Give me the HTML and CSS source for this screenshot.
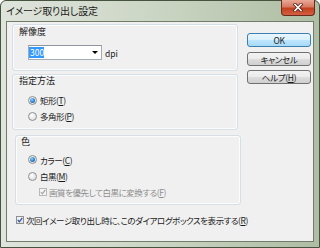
FILE: index.html
```html
<!DOCTYPE html>
<html lang="ja">
<head>
    <meta charset="UTF-8">
    <title>イメージ取り出し設定</title>
    <link rel="stylesheet" href="styles.css">
</head>
<body>
    <div class="window">
        <div class="titlebar">
            <span class="title">イメージ取り出し設定</span>
            <span class="close">
                <svg width="10" height="9" viewBox="0 0 10 9">
                    <path d="M2 1.5 L8 7.5 M8 1.5 L2 7.5" stroke="#5a2016" stroke-width="3.2" stroke-linecap="square"/>
                    <path d="M2 1.5 L8 7.5 M8 1.5 L2 7.5" stroke="#ffffff" stroke-width="1.6" stroke-linecap="square"/>
                </svg>
            </span>
        </div>

        <div class="client">
            <div class="main">
                <div class="group group-res">
                    <div class="legend">解像度</div>
                    <div class="res-row">
                        <div class="combo">
                            <span class="sel">300</span>
                            <span class="arrow"></span>
                        </div>
                        <span class="unit">dpi</span>
                    </div>
                </div>

                <div class="group group-method">
                    <div class="legend">指定方法</div>
                    <div class="opt"><span class="radio on"></span>矩形(<u>T</u>)</div>
                    <div class="opt"><span class="radio"></span>多角形(<u>P</u>)</div>
                </div>

                <div class="group group-color">
                    <div class="legend">色</div>
                    <div class="opt opt-first"><span class="radio on"></span>カラー(<u>C</u>)</div>
                    <div class="opt"><span class="radio"></span>白黒(<u>M</u>)</div>
                    <div class="opt sub disabled">
                        <span class="check">
                            <svg width="6" height="6" viewBox="0 0 6 6"><path d="M0.8 3 L2.4 4.8 L5.3 0.9" fill="none" stroke="#a0a0a0" stroke-width="1.1"/></svg>
                        </span>画質を優先して白黒に変換する(<u>F</u>)
                    </div>
                </div>

                <div class="opt show-next">
                    <span class="check">
                        <svg width="6" height="6" viewBox="0 0 6 6"><path d="M0.8 3 L2.4 4.8 L5.3 0.9" fill="none" stroke="#2c4fa8" stroke-width="1.2"/></svg>
                    </span>次回イメージ取り出し時に、このダイアログボックスを表示する(<u>R</u>)
                </div>
            </div>

            <div class="buttons">
                <button class="btn btn-default">OK</button>
                <button class="btn">キャンセル</button>
                <button class="btn btn-help">ヘルプ(<u>H</u>)</button>
            </div>
        </div>
    </div>
</body>
</html>
```

FILE: styles.css
```css
* {
    box-sizing: border-box;
}
body {
    margin: 0;
    font-family: "Noto Sans CJK JP", sans-serif;
    font-feature-settings: "palt";
    color: #1a1a1a;
}
.window {
    width: 320px;
    height: 248px;
    border: 1px solid #45533f;
    border-radius: 6px 6px 0 0;
    padding: 0 5px 5px 5px;
    background: linear-gradient(90deg, #dfe4dc 0%, #cdd7c6 45%, #aebda3 100%);
    display: flex;
    flex-direction: column;
}
.titlebar {
    height: 20px;
    display: flex;
    justify-content: space-between;
    align-items: flex-start;
}
.title {
    font-size: 10px;
    line-height: 20px;
    letter-spacing: -0.2px;
    color: #1b1b1b;
}
.close {
    width: 34px;
    height: 16px;
    margin-top: -1px;
    margin-right: -1px;
    border: 1px solid #6b2a1d;
    border-top: none;
    border-radius: 0 0 4px 4px;
    background: linear-gradient(#e9a998 0%, #d77a62 45%, #c2401f 55%, #d3603f 100%);
    display: flex;
    align-items: center;
    justify-content: center;
}
.client {
    flex: 1;
    background: #f0f0f0;
    border: 1px solid #6f7d69;
    display: flex;
    gap: 9px;
    padding: 2px 0 0 5px;
    font-size: 8.5px;
    letter-spacing: -0.45px;
}
.main {
    width: 226px;
}
.group {
    width: 226px;
    border: 1px solid #d5dfe5;
    border-radius: 3px;
    box-shadow: inset 0 0 0 1px #fbfcfd;
    line-height: 12px;
}
.legend {
    padding-left: 6px;
    font-size: 9px;
    letter-spacing: 0;
}
.group-res {
    height: 47px;
}
.group-res .legend {
    margin-top: 1px;
}
.res-row {
    display: flex;
    align-items: center;
    margin: 7px 0 0 15px;
}
.combo {
    width: 74px;
    height: 15px;
    background: #fff;
    border: 1px solid #a4abb4;
    border-top-color: #8e959e;
    display: flex;
    align-items: center;
    justify-content: space-between;
    padding: 0 3px 0 0;
}
.sel {
    background: #3399ff;
    color: #fff;
    height: 11px;
    line-height: 11px;
    padding: 0 1px;
    width: 15px;
    letter-spacing: 0;
}
.arrow {
    width: 0;
    height: 0;
    border-left: 3px solid transparent;
    border-right: 3px solid transparent;
    border-top: 3px solid #000;
}
.unit {
    margin-left: 3px;
    letter-spacing: 0;
}
.group-method {
    height: 56px;
    margin-top: 3px;
}
.group-method .legend {
    margin-bottom: 5px;
}
.opt {
    display: flex;
    align-items: center;
    height: 16px;
    padding-left: 15px;
    white-space: nowrap;
}
.radio {
    width: 9px;
    height: 9px;
    border-radius: 50%;
    border: 1px solid #8c8f91;
    background: radial-gradient(circle at 40% 35%, #ffffff 0%, #e6e6e6 60%, #cfd1d3 100%);
    margin-right: 3px;
    display: flex;
    align-items: center;
    justify-content: center;
}
.radio.on::after {
    content: "";
    width: 5px;
    height: 5px;
    border-radius: 50%;
    background: radial-gradient(circle at 40% 35%, #8fd4ff 0%, #2c7fd0 55%, #1b4f9a 100%);
}
.group-color {
    height: 70px;
    margin: 5px 0 0 3px;
}
.group-color .legend {
    padding-left: 5px;
    margin-bottom: 3px;
}
.group-color .opt {
    padding-left: 12px;
}
.group-color .opt-first {
    height: 17px;
}
.group-color .sub {
    padding-left: 23px;
}
.check {
    width: 8px;
    height: 8px;
    border: 1px solid #8e8f8f;
    background: linear-gradient(#f4f4f4, #e2e2e2);
    margin-right: 2px;
    display: flex;
    align-items: center;
    justify-content: center;
}
.disabled {
    color: #8d8d8d;
}
.disabled .check {
    border-color: #b8b8b8;
    background: #f4f4f4;
}
.show-next {
    margin-top: 7px;
    padding-left: 4px;
}
.buttons {
    width: 64px;
    margin-top: 9px;
    display: flex;
    flex-direction: column;
}
.btn {
    width: 64px;
    height: 14px;
    padding: 0;
    margin: 0 0 5px 0;
    font-family: "Noto Sans CJK JP", sans-serif;
    font-feature-settings: "palt";
    font-size: 8.5px;
    letter-spacing: -0.3px;
    line-height: 12px;
    color: #1a1a1a;
    border: 1px solid #707070;
    border-radius: 3px;
    background: linear-gradient(#f2f2f2 0%, #ebebeb 50%, #dddddd 51%, #cfcfcf 100%);
}
.btn-default {
    border-color: #3c7fb1;
    background: linear-gradient(#eaf6fd 0%, #d9f0fc 50%, #bee6fd 51%, #a7d9f5 100%);
}
.btn-help {
    margin-top: -1px;
}
```
